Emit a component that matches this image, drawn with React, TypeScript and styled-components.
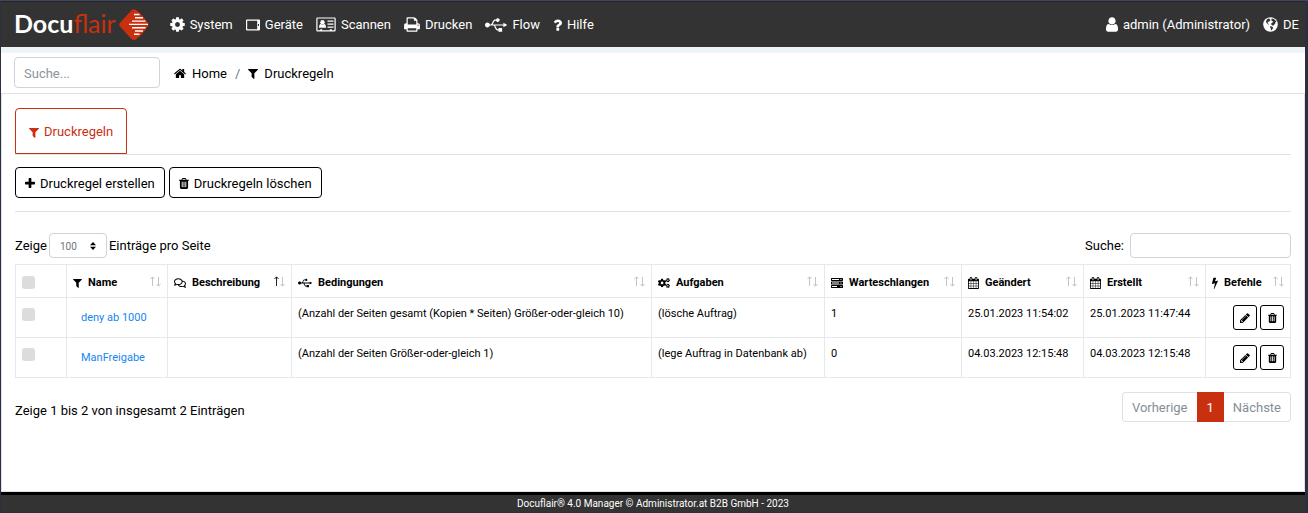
import React from "react";
import styled, { createGlobalStyle } from "styled-components";
import { FaCogs, FaRegComments, FaUsb } from "react-icons/fa";

const red = "#c93010";

const GlobalStyle = createGlobalStyle`
  *, *::before, *::after { box-sizing: border-box; }
  body {
    margin: 0;
    background: #2b3040;
    color: #000;
    font-family: Roboto, "Liberation Sans", sans-serif;
    font-size: 13px;
    line-height: 20px;
  }
  button, input, select { font: inherit; color: inherit; }
  a { color: inherit; text-decoration: none; }
`;

/* ---------- icons ---------- */

const paths = {
  cog: "M1152 896q0-106-75-181t-181-75-181 75-75 181 75 181 181 75 181-75 75-181zm512-109v222q0 12-8 23t-20 13l-185 28q-19 54-39 91 35 50 107 138 10 12 10 25t-9 23q-27 37-99 108t-94 71q-12 0-26-9l-138-108q-44 23-91 38-16 136-29 186-7 28-36 28h-222q-14 0-24.500-8.500t-11.500-21.500l-28-184q-49-16-90-37l-141 107q-10 9-25 9-14 0-25-11-126-114-165-168-7-10-7-23 0-12 8-23 15-21 51-66.500t54-70.500q-27-50-41-99l-183-27q-13-2-21-12.500t-8-23.500v-222q0-12 8-23t19-13l186-28q14-46 39-92-40-57-107-138-10-12-10-24 0-10 9-23 26-36 98.500-107.500t94.500-71.500q13 0 26 10l138 107q44-23 91-38 16-136 29-186 7-28 36-28h222q14 0 24.500 8.500t11.500 21.500l28 184q49 16 90 37l142-107q9-9 24-9 13 0 25 10 129 119 165 170 7 8 7 22 0 12-8 23-15 21-51 66.500t-54 70.500q26 50 41 98l183 28q13 2 21 12.500t8 23.500z",
  user: "M1536 1399q0 109-62.500 187t-150.500 78h-854q-88 0-150.500-78t-62.500-187q0-85 8.500-160.500t31.500-152 58.500-131 94-89 134.500-34.500q131 128 313 128t313-128q76 0 134.500 34.500t94 89 58.500 131 31.500 152 8.500 160.500zm-256-887q0 159-112.500 271.500t-271.500 112.500-271.500-112.500-112.500-271.500 112.500-271.500 271.500-112.500 271.500 112.500 112.500 271.500z",
  filter: "M1595 295q17 41-14 70l-493 493v742q0 42-39 59-13 5-25 5-27 0-45-19l-256-256q-19-19-19-45v-486l-493-493q-31-29-14-70 17-39 59-39h1280q42 0 59 39z",
  plus: "M1600 736v192q0 40-28 68t-68 28h-416v416q0 40-28 68t-68 28h-192q-40 0-68-28t-28-68v-416h-416q-40 0-68-28t-28-68v-192q0-40 28-68t68-28h416v-416q0-40 28-68t68-28h192q40 0 68 28t28 68v416h416q40 0 68 28t28 68z",
  trash: "M704 1376v-704q0-14-9-23t-23-9h-64q-14 0-23 9t-9 23v704q0 14 9 23t23 9h64q14 0 23-9t9-23zm256 0v-704q0-14-9-23t-23-9h-64q-14 0-23 9t-9 23v704q0 14 9 23t23 9h64q14 0 23-9t9-23zm256 0v-704q0-14-9-23t-23-9h-64q-14 0-23 9t-9 23v704q0 14 9 23t23 9h64q14 0 23-9t9-23zm-544-992h448l-48-117q-7-9-17-11h-317q-10 2-17 11zm928 32v64q0 14-9 23t-23 9h-96v948q0 83-47 143.500t-113 60.500h-832q-66 0-113-58.500t-47-141.500v-952h-96q-14 0-23-9t-9-23v-64q0-14 9-23t23-9h309l70-167q15-37 54-63t79-26h320q40 0 79 26t54 63l70 167h309q14 0 23 9t9 23z",
  pencil: "M491 1536l91-91-235-235-91 91v107h128v128h107zm523-928q0-22-22-22-10 0-17 7l-542 542q-7 7-7 17 0 22 22 22 10 0 17-7l542-542q7-7 7-17zm-54-192l416 416-832 832h-416v-416zm683 96q0 53-37 90l-166 166-416-416 166-165q36-38 90-38 53 0 91 38l235 234q37 39 37 91z",
  home: "M1472 992v480q0 26-19 45t-45 19h-384v-384h-256v384h-384q-26 0-45-19t-19-45v-480q0-1 .5-3t.5-3l575-474 575 474q1 2 1 6zm223-69l-62 74q-8 9-21 11h-3q-13 0-21-7l-692-577-692 577q-12 8-24 7-13-2-21-11l-62-74q-8-10-7-23.500t11-21.500l719-599q32-26 76-26t76 26l244 204v-195q0-14 9-23t23-9h192q14 0 23 9t9 23v408l219 182q10 8 11 21.500t-7 23.500z",
  bolt: "M1333 566q18 20 7 44l-540 1157q-13 25-42 25-4 0-14-2-17-5-25.500-19t-4.500-30l197-808-406 101q-4 1-12 1-18 0-31-11-18-15-13-39l201-825q4-14 16-23t28-9h328q19 0 32 12.500t13 29.500q0 8-5 18l-171 463 396-98q8-2 12-2 19 0 34 15z",
  calendar: "M192 1664h288v-288h-288v288zm352 0h320v-288h-320v288zm-352-352h288v-320h-288v320zm352 0h320v-320h-320v320zm-352-384h288v-288h-288v288zm736 736h320v-288h-320v288zm-384-736h320v-288h-320v288zm768 736h288v-288h-288v288zm-384-352h320v-320h-320v320zm-352-864v-288q0-13-9.500-22.500t-22.500-9.500h-64q-13 0-22.500 9.500t-9.500 22.500v288q0 13 9.500 22.500t22.500 9.500h64q13 0 22.500-9.500t9.500-22.500zm736 864h288v-320h-288v320zm-384-384h320v-288h-320v288zm384 0h288v-288h-288v288zm32-480v-288q0-13-9.500-22.500t-22.500-9.500h-64q-13 0-22.500 9.500t-9.500 22.500v288q0 13 9.500 22.500t22.500 9.500h64q13 0 22.500-9.500t9.500-22.500zm384-64v1280q0 52-38 90t-90 38h-1408q-52 0-90-38t-38-90v-1280q0-52 38-90t90-38h128v-96q0-66 47-113t113-47h64q66 0 113 47t47 113v96h384v-96q0-66 47-113t113-47h64q66 0 113 47t47 113v96h128q52 0 90 38t38 90z",
  print: "M448 1536h896v-256h-896v256zm0-640h896v-384h-160q-40 0-68-28t-28-68v-160h-640v640zm1152 64q0-26-19-45t-45-19-45 19-19 45 19 45 45 19 45-19 19-45zm128 0v416q0 13-9.500 22.500t-22.500 9.500h-224v160q0 40-28 68t-68 28h-960q-40 0-68-28t-28-68v-160h-224q-13 0-22.500-9.500t-9.500-22.500v-416q0-79 56.500-135.500t135.500-56.500h64v-544q0-40 28-68t68-28h672q40 0 88 20t76 48l152 152q28 28 48 76t20 88v256h64q79 0 135.500 56.500t56.500 135.500z",
  question: "M1088 1256v240q0 16-12 28t-28 12h-240q-16 0-28-12t-12-28v-240q0-16 12-28t28-12h240q16 0 28 12t12 28zm316-600q0 54-15.500 101t-35 76.500-55 59.500-57.500 43.500-61 35.500q-41 23-68.500 65t-27.500 67q0 17-12 32.500t-28 15.500h-240q-15 0-25.500-18.500t-10.500-37.500v-45q0-83 65-156.500t143-108.500q59-27 84-56t25-76q0-42-46.500-74t-107.500-32q-65 0-108 29-35 25-107 115-13 16-31 16-12 0-25-8l-164-125q-13-10-15.500-25t5.500-28q160-266 464-266 80 0 161 31t146 83 106 127.500 41 158.500z",
};

type GlyphName = keyof typeof paths;

/* The 1792-unit grid has side bearings; each glyph is cropped to its own width. */
const bearings: Record<GlyphName, [number, number]> = {
  cog: [128, 1536],
  user: [256, 1280],
  filter: [192, 1408],
  plus: [192, 1408],
  trash: [192, 1408],
  pencil: [128, 1536],
  home: [64, 1664],
  bolt: [448, 896],
  calendar: [64, 1664],
  print: [64, 1664],
  question: [384, 1024],
};

const Svg = styled.svg`
  display: block;
  flex: none;
  fill: currentColor;
`;

function Glyph({ name, size }: { name: GlyphName; size: number }) {
  const [x, w] = bearings[name];
  return (
    <Svg width={Math.round((w / 1792) * size)} height={size} viewBox={`${x} 0 ${w} 1792`} aria-hidden="true">
      <path d={paths[name]} />
    </Svg>
  );
}

const TabletIcon = () => (
  <Svg width="14" height="12" viewBox="0 0 14 12" aria-hidden="true">
    <path fillRule="evenodd" d="M1 .5h12q1 0 1 1v9q0 1-1 1H1q-1 0-1-1v-9q0-1 1-1zM1.200 1.700v8.600h10V1.700zM12 5v2h1V5z" />
  </Svg>
);

const CardIcon = () => (
  <Svg width="20" height="16" viewBox="0 0 20 16" aria-hidden="true">
    <path fillRule="evenodd" d="M1.500 0.500h17q1.200 0 1.200 1.200v11.600q0 1.200-1.200 1.200h-17q-1.200 0-1.200-1.200V1.700q0-1.200 1.200-1.200zM1.500 1.600v11.700h2.700v-1h2v1h7.600v-1h2v1h2.700V1.600z" />
    <circle cx="6.500" cy="5.300" r="2.200" />
    <path d="M3 10.800q0-3.800 1.900-3.800 1.600 1.200 3.200 0 1.900 0 1.900 3.800z" />
    <path d="M11.500 3.500h6v1.200h-6zM11.500 6.500h6v1.200h-6zM11.500 9.500h6v1.200h-6z" />
  </Svg>
);

const GlobeIcon = () => (
  <Svg width="15" height="15" viewBox="0 0 15 15" aria-hidden="true">
    <circle cx="7.500" cy="7.500" r="7.300" />
    <g fill="#333">
      <path d="M4 2.300l1.600-.8 1.300.2-.3.900 1 .5-1.400 1.300-1.200.5-.4 1 .8.900 1.100.7-1.300-.1-1.300-1.100-1-1.500z" />
      <path d="M8.700 1.500l2.200.6 1.800 1.600.6 1.200-1.200.7.2 1.300-1.200.5-.7 1.300-1-.3-1.200-1 .2-1.300 1.300-.7.500-.9-1.300-.6-.6-.9z" />
      <path d="M7.300 9l1.500.4 1.300 1.100-.3 1.200-1.300 1.600-.6-.1-.1-2-.8-1.200z" />
    </g>
  </Svg>
);

const ServerIcon = () => (
  <Svg width="12" height="10" viewBox="0 0 12 10" aria-hidden="true">
    <path fillRule="evenodd" d="M.5 0h11l.5.5v2l-.5.5H.5L0 2.500v-2zM1 1v1h7V1zM9.500 1v1h1V1zM.5 3.500h11l.5.5v2l-.5.5H.5L0 6V4zM1 4.500v1h7v-1zM9.500 4.500v1h1v-1zM.5 7h11l.5.500v2l-.5.500H.5L0 9.500v-2zM1 8v1h5V8zM9.500 8v1h1V8z" />
  </Svg>
);

const SortArrows = ({ active }: { active?: boolean }) => (
  <Svg width="11" height="11" viewBox="0 0 11 11" aria-hidden="true">
    <path d="M2.500 10V1M.5 3l2-2.200 2 2.200" fill="none" stroke={active ? "#222" : "#c4c4c4"} />
    <path d="M8.500 1v9M6.500 8l2 2.200 2-2.200" fill="none" stroke="#c4c4c4" />
  </Svg>
);

const LogoMark = () => (
  <Svg width="30" height="31" viewBox="0 0 30 31" aria-hidden="true">
    <path fill={red} d="M12.500 1.200q2.400-1.800 4.800 0 4.500 3 7 6.500l4.500 6q1.500 1.900 0 3.800l-4.500 6q-2.500 3.500-7 6.500-2.400 1.800-4.800 0L1 17.500q-1.500-1.900 0-3.800z" />
    <path stroke="#fff" strokeWidth="1.400" d="M15 5.500h5.500M16 8.800h8M13 12.100h13.500M10 15.400h19M13 18.700h13.500M16 22h8M15 25.300h5.500" />
  </Svg>
);

/* ---------- page frame ---------- */

const Frame = styled.div`
  display: flex;
  flex-direction: column;
  min-height: 100vh;
  padding: 0 3px 1px 1px;
  border-top: 1px solid #41465c;
`;

const TopBar = styled.header`
  display: flex;
  align-items: center;
  justify-content: space-between;
  height: 46px;
  padding: 0 6px 0 13px;
  border-top: 1px solid #22242c;
  background: #333;
  color: #fff;
`;

const NavGroup = styled.nav`
  display: flex;
  align-items: center;
  gap: 13px;
`;

const NavItem = styled.a`
  display: flex;
  align-items: center;
  gap: 5px;
  white-space: nowrap;
`;

const Logo = styled.a`
  display: flex;
  align-items: center;
  gap: 3px;
  margin-right: 8px;
  font: 700 25px/30px Lato, sans-serif;
`;

const LogoText = styled.span`
  padding-bottom: 3px;
`;

const LogoLight = styled.span`
  color: ${red};
  font-weight: 400;
`;

const Crumbs = styled.div`
  display: flex;
  align-items: center;
  gap: 14px;
  padding: 4px 13px 5px;
  border-top: 6px solid #edf4f7;
  border-bottom: 1px solid #dee2e6;
  background: #fff;
`;

const TextInput = styled.input<{ $width: number; $height: number }>`
  width: ${(p) => p.$width}px;
  height: ${(p) => p.$height}px;
  padding: 2px 9px 0;
  border: 1px solid #ced4da;
  border-radius: 4px;
  background: #fff;
  &::placeholder { color: #8c959d; opacity: 1; }
`;

const CrumbNav = styled.nav`
  display: flex;
  align-items: center;
  gap: 8px;
  padding-top: 2px;
`;

const Crumb = styled.a`
  display: flex;
  align-items: center;
  gap: 6px;
`;

const Slash = styled.span`
  color: #6c757d;
`;

const Main = styled.main`
  flex: 1;
  padding: 14px 13px;
  border: solid #dee2e6;
  border-width: 0 1px 1px;
  background: #fff;
`;

const Footer = styled.footer`
  border-top: 3px solid #000;
  background: #333;
  color: #fff;
  font-size: 10px;
  line-height: 17px;
  text-align: center;
`;

/* ---------- content ---------- */

const TabBar = styled.div`
  display: flex;
  border-bottom: 1px solid #dee2e6;
`;

const Tab = styled.button`
  display: flex;
  align-items: center;
  gap: 5px;
  height: 46px;
  padding: 2px 13px 0;
  border: 1px solid ${red};
  border-radius: 4px 4px 0 0;
  background: #fff;
  color: ${red};
`;

const Actions = styled.div`
  display: flex;
  gap: 4px;
  padding: 12px 0 13px;
  border-bottom: 1px solid #dee2e6;
`;

const ActionButton = styled.button`
  display: flex;
  align-items: center;
  gap: 5px;
  height: 31px;
  padding: 2px 9px 0;
  border: 1px solid #000;
  border-radius: 4px;
  background: #fff;
`;

const Controls = styled.div`
  display: flex;
  align-items: center;
  justify-content: space-between;
  padding: 21px 0 6px;
`;

const ControlLabel = styled.label<{ $gap: number }>`
  display: flex;
  align-items: center;
  gap: ${(p) => p.$gap}px;
`;

const SelectWrap = styled.span`
  display: grid;
  align-items: center;
  & > * { grid-area: 1 / 1; }
  & > svg { justify-self: end; margin-right: 11px; pointer-events: none; }
`;

const Select = styled.select`
  width: 58px;
  height: 25px;
  padding: 2px 10px 0;
  border: 1px solid #ced4da;
  border-radius: 4px;
  background: #fff;
  color: #6c757d;
  font-size: 10px;
  appearance: none;
`;

const Table = styled.table`
  width: 100%;
  border-collapse: collapse;
  table-layout: fixed;
  font-size: 11px;
  line-height: 18px;
`;

const Col = styled.col<{ $width?: number }>`
  width: ${(p) => (p.$width ? `${p.$width}px` : "auto")};
`;

const Th = styled.th`
  height: 33px;
  padding: 4px 6px 0;
  border: 1px solid #e6e9ec;
  font-weight: 700;
  text-align: left;
`;

const Heading = styled.span`
  display: flex;
  align-items: center;
  gap: 6px;
  & > :last-child { margin: 0 0 4px auto; }
`;

const Td = styled.td`
  padding: 7px 6px;
  border: 1px solid #e6e9ec;
  vertical-align: top;
  white-space: nowrap;
`;

const NameLink = styled.a`
  display: block;
  padding: 4px 8px;
  color: #1686f0;
  line-height: 17px;
`;

const Check = styled.input`
  display: block;
  width: 13px;
  height: 13px;
  margin: 3px 0 5px;
  border-radius: 3px;
  background: #dcdcdc;
  appearance: none;
`;

const RowActions = styled.div`
  display: flex;
  justify-content: flex-end;
  gap: 3px;
`;

const IconButton = styled.button`
  display: grid;
  place-items: center;
  width: 24px;
  height: 25px;
  padding: 0;
  border: 1px solid #000;
  border-radius: 3px;
  background: #fff;
`;

const Bottom = styled.div`
  display: flex;
  align-items: center;
  justify-content: space-between;
  padding-top: 14px;
`;

const Info = styled.div`
  padding-top: 8px;
`;

const Pager = styled.nav`
  display: flex;
`;

const PageButton = styled.button<{ $active?: boolean }>`
  height: 30px;
  padding: 2px 9px 0;
  border: 1px solid ${(p) => (p.$active ? red : "#dee2e6")};
  background: ${(p) => (p.$active ? red : "#fff")};
  color: ${(p) => (p.$active ? "#fff" : "#868e96")};
  &:first-child { border-right: 0; border-radius: 4px 0 0 4px; }
  &:last-child { border-left: 0; border-radius: 0 4px 4px 0; }
`;

const columns: { label: string; icon: React.ReactNode; width?: number; sorted?: boolean }[] = [
  { label: "Name", icon: <Glyph name="filter" size={12} />, width: 101 },
  { label: "Beschreibung", icon: <FaRegComments size={12} />, width: 124, sorted: true },
  { label: "Bedingungen", icon: <FaUsb size={14} /> },
  { label: "Aufgaben", icon: <FaCogs size={12} />, width: 173 },
  { label: "Warteschlangen", icon: <ServerIcon />, width: 137 },
  { label: "Geändert", icon: <Glyph name="calendar" size={12} />, width: 122 },
  { label: "Erstellt", icon: <Glyph name="calendar" size={12} />, width: 122 },
  { label: "Befehle", icon: <Glyph name="bolt" size={12} />, width: 85 },
];

const rules = [
  {
    name: "deny ab 1000",
    cells: ["", "(Anzahl der Seiten gesamt (Kopien * Seiten) Größer-oder-gleich 10)", "(lösche Auftrag)", "1", "25.01.2023 11:54:02", "25.01.2023 11:47:44"],
  },
  {
    name: "ManFreigabe",
    cells: ["", "(Anzahl der Seiten Größer-oder-gleich 1)", "(lege Auftrag in Datenbank ab)", "0", "04.03.2023 12:15:48", "04.03.2023 12:15:48"],
  },
];

export default function App() {
  return (
    <>
      <GlobalStyle />
      <Frame>
        <TopBar>
          <NavGroup aria-label="Hauptmenü">
            <Logo href="#">
              <LogoText>Docu<LogoLight>flair</LogoLight></LogoText>
              <LogoMark />
            </Logo>
            <NavItem href="#"><Glyph name="cog" size={17} />System</NavItem>
            <NavItem href="#"><TabletIcon />Geräte</NavItem>
            <NavItem href="#"><CardIcon />Scannen</NavItem>
            <NavItem href="#"><Glyph name="print" size={17} />Drucken</NavItem>
            <NavItem href="#"><FaUsb size={22} />Flow</NavItem>
            <NavItem href="#"><Glyph name="question" size={16} />Hilfe</NavItem>
          </NavGroup>
          <NavGroup aria-label="Konto">
            <NavItem href="#"><Glyph name="user" size={17} />admin (Administrator)</NavItem>
            <NavItem href="#"><GlobeIcon />DE</NavItem>
          </NavGroup>
        </TopBar>

        <Crumbs>
          <TextInput $width={146} $height={31} placeholder="Suche..." aria-label="Suche" />
          <CrumbNav aria-label="Pfad">
            <Crumb href="#"><Glyph name="home" size={13} />Home</Crumb>
            <Slash>/</Slash>
            <Crumb href="#"><Glyph name="filter" size={13} />Druckregeln</Crumb>
          </CrumbNav>
        </Crumbs>

        <Main>
          <TabBar role="tablist">
            <Tab role="tab" aria-selected="true"><Glyph name="filter" size={13} />Druckregeln</Tab>
          </TabBar>
          <Actions>
            <ActionButton><Glyph name="plus" size={13} />Druckregel erstellen</ActionButton>
            <ActionButton><Glyph name="trash" size={13} />Druckregeln löschen</ActionButton>
          </Actions>

          <Controls>
            <ControlLabel $gap={2}>
              Zeige
              <SelectWrap>
                <Select defaultValue="100">
                  <option>100</option>
                </Select>
                <Svg width="6" height="8" viewBox="0 0 6 8" aria-hidden="true">
                  <path d="M0 3.200L3 0l3 3.200zM0 4.800h6L3 8z" />
                </Svg>
              </SelectWrap>
              Einträge pro Seite
            </ControlLabel>
            <ControlLabel $gap={6}>
              Suche:
              <TextInput $width={161} $height={25} type="search" />
            </ControlLabel>
          </Controls>

          <Table>
            <colgroup>
              <Col $width={51} />
              {columns.map((c) => <Col key={c.label} $width={c.width} />)}
            </colgroup>
            <thead>
              <tr>
                <Th><Check type="checkbox" aria-label="Alle auswählen" /></Th>
                {columns.map((c) => (
                  <Th key={c.label}>
                    <Heading>{c.icon}{c.label}<SortArrows active={c.sorted} /></Heading>
                  </Th>
                ))}
              </tr>
            </thead>
            <tbody>
              {rules.map((r) => (
                <tr key={r.name}>
                  <Td><Check type="checkbox" aria-label={r.name} /></Td>
                  <Td><NameLink href="#">{r.name}</NameLink></Td>
                  {r.cells.map((text, i) => <Td key={i}>{text}</Td>)}
                  <Td>
                    <RowActions>
                      <IconButton aria-label="Bearbeiten"><Glyph name="pencil" size={12} /></IconButton>
                      <IconButton aria-label="Löschen"><Glyph name="trash" size={12} /></IconButton>
                    </RowActions>
                  </Td>
                </tr>
              ))}
            </tbody>
          </Table>

          <Bottom>
            <Info>Zeige 1 bis 2 von insgesamt 2 Einträgen</Info>
            <Pager aria-label="Seiten">
              <PageButton>Vorherige</PageButton>
              <PageButton $active>1</PageButton>
              <PageButton>Nächste</PageButton>
            </Pager>
          </Bottom>
        </Main>

        <Footer>Docuflair® 4.0 Manager © Administrator.at B2B GmbH - 2023</Footer>
      </Frame>
    </>
  );
}
